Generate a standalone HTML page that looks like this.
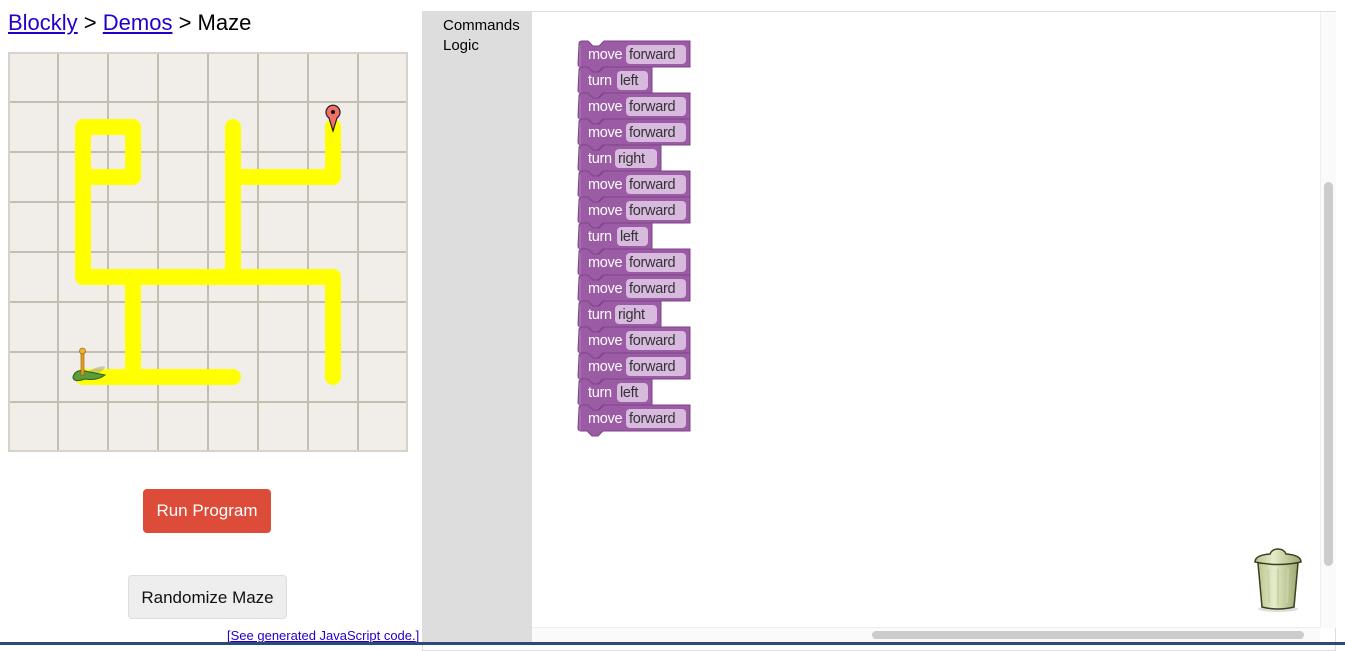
<!DOCTYPE html>
<html><head><meta charset="utf-8"><style>
body{margin:0;width:1345px;height:645px;overflow:hidden;background:#fff;font-family:"Liberation Sans",Arial,sans-serif;position:relative}
.crumb{position:absolute;left:8px;top:10px;font-size:22px;color:#000}
.crumb a{text-decoration:underline;color:#2200cc}
.btn{position:absolute;border-radius:4px;font-size:17px;text-align:center;box-sizing:border-box}
.run{left:143px;top:489px;width:128px;height:44px;line-height:44px;background:#dd4b39;color:#fff}
.rnd{left:128px;top:575px;width:159px;height:44px;line-height:44px;background:#eee;border:1px solid #ddd;color:#111}
.js{position:absolute;left:227px;top:628px;font-size:13px;color:#2200cc}
.js span{text-decoration:underline}
.ws{position:absolute;left:422px;top:11px;width:914px;height:640px;border:1px solid #ddd;box-sizing:border-box;background:#fff}
.tb{position:absolute;left:423px;top:12px;width:109px;height:633px;background:#ddd;font-size:15px;color:#000}
.tb div{padding-left:20px;height:20px;line-height:20px}
</style></head><body>
<div class="crumb"><a>Blockly</a> &gt; <a>Demos</a> &gt; Maze</div>
<svg style="position:absolute;left:8px;top:52px" width="400" height="400" viewBox="8 52 400 400">
<rect x="8" y="52" width="400" height="400" fill="#f1eeea"/>
<g stroke="#c4bdb2" stroke-width="2">
<line x1="58" y1="52" x2="58" y2="452"/><line x1="108" y1="52" x2="108" y2="452"/><line x1="158" y1="52" x2="158" y2="452"/><line x1="208" y1="52" x2="208" y2="452"/><line x1="258" y1="52" x2="258" y2="452"/><line x1="308" y1="52" x2="308" y2="452"/><line x1="358" y1="52" x2="358" y2="452"/>
<line x1="8" y1="102" x2="408" y2="102"/><line x1="8" y1="152" x2="408" y2="152"/><line x1="8" y1="202" x2="408" y2="202"/><line x1="8" y1="252" x2="408" y2="252"/><line x1="8" y1="302" x2="408" y2="302"/><line x1="8" y1="352" x2="408" y2="352"/><line x1="8" y1="402" x2="408" y2="402"/>
<rect x="9" y="53" width="398" height="398" fill="none" stroke="#d8d2c8"/>
</g>
<g stroke="#ffff00" stroke-width="16" stroke-linecap="round" stroke-linejoin="round" fill="none">
<path d="M83 277 V127 H133 V177 H83"/>
<path d="M83 277 H333 V377"/>
<path d="M133 277 V377"/>
<path d="M83 377 H233"/>
<path d="M233 277 V127"/>
<path d="M233 177 H333 V127"/>
</g>
<ellipse cx="94" cy="372" rx="12" ry="3" fill="#999" opacity=".5" transform="rotate(-25 94 372)"/>
<path d="M73 377 q2-8 12-6 q10 2 20 4 q-8 6-20 4 q-12 4-12-2z" fill="#5a9e3a" stroke="#2d5a1c" stroke-width="1"/>
<rect x="81" y="351" width="3" height="24" fill="#e8a020" stroke="#8a5a00" stroke-width=".6"/>
<circle cx="82.5" cy="351" r="3" fill="#f0b030" stroke="#8a5a00" stroke-width=".6"/>
<path d="M333 131 L329 118 A7 7 0 1 1 337 118 Z" fill="#f07068" stroke="#222" stroke-width="1.2"/>
<circle cx="333" cy="112" r="2" fill="#111"/>
</svg>
<div class="btn run">Run Program</div>
<div class="btn rnd">Randomize Maze</div>
<div class="js">[<span>See generated JavaScript code.</span>]</div>
<div class="ws"></div>
<div class="tb"><div style="margin-top:4px">Commands</div><div>Logic</div></div>
<div style="position:absolute;left:1320px;top:12px;width:15px;height:616px;background:#fafafa;border-left:1px solid #eee"></div>
<div style="position:absolute;left:1324px;top:182px;width:9px;height:384px;background:#ccc;border-radius:5px"></div>
<div style="position:absolute;left:532px;top:627px;width:788px;height:18px;background:#fafafa;border-top:1px solid #eee"></div>
<div style="position:absolute;left:872px;top:631px;width:432px;height:8px;background:#ccc;border-radius:4px"></div>
<div style="position:absolute;left:0;top:642px;width:1345px;height:3px;background:#2a4a7a"></div>
<svg style="position:absolute;left:1250px;top:545px" width="56" height="68" viewBox="0 0 56 68">
<defs><linearGradient id="g" x1="0" x2="1"><stop offset="0" stop-color="#b8c490"/><stop offset=".4" stop-color="#e6ecc8"/><stop offset="1" stop-color="#9aa870"/></linearGradient></defs>
<ellipse cx="28" cy="64" rx="20" ry="3" fill="#aaa" opacity=".4"/>
<path d="M8 18 L12 62 Q28 66 44 62 L48 18 Z" fill="url(#g)" stroke="#3a4020" stroke-width="1.5"/>
<g stroke="#c8d2a8" stroke-width="2"><line x1="18" y1="24" x2="19" y2="58"/><line x1="28" y1="24" x2="28" y2="60"/><line x1="38" y1="24" x2="37" y2="58"/></g>
<path d="M5 17 Q5 10 20 9 Q22 4 28 4 Q34 4 36 9 Q51 10 51 17 Q28 22 5 17Z" fill="url(#g)" stroke="#3a4020" stroke-width="1.5"/>
</svg>
<svg style="position:absolute;left:575px;top:36px" width="130" height="410" font-family="Liberation Sans, Arial, sans-serif" font-size="14.5" letter-spacing="-0.3">
<g id="blocks"></g>
</svg>
<script>
var rows=[["move","forward"],["turn","left"],["move","forward"],["move","forward"],["turn","right"],["move","forward"],["move","forward"],["turn","left"],["move","forward"],["move","forward"],["turn","right"],["move","forward"],["move","forward"],["turn","left"],["move","forward"]];
var g=document.getElementById('blocks'),h='';
rows.forEach(function(r,i){
 var y=5+i*26,w=r[0]=="move"?114:(r[1]=="left"?76:85);
 var x=4;
 var p='M'+x+' '+(y+3)+' q0-3 3-3 h6 l5 5 h6 l5-5 h'+(w-28)+' v26 h-'+(w-27)+' l-5 5 h-6 l-5-5 h-6 q-3 0-3-3 z';
 h+='<path d="'+p+'" fill="#9b5ba5" stroke="#7d4588" stroke-width="1"/>';
 h+='<path d="M'+(x+1)+' '+(y+4)+' v22" stroke="#b57fc0" stroke-width="1"/>';
 var fx=r[0]=="move"?47:(r[1]=="left"?38:36),fw=r[0]=="move"?60:(r[1]=="left"?31:42);
 h+='<text x="'+(x+9)+'" y="'+(y+18)+'" fill="#fff">'+r[0]+'</text>';
 h+='<rect x="'+(x+fx)+'" y="'+(y+4)+'" width="'+fw+'" height="19" rx="4" fill="#d7bade"/>';
 h+='<text x="'+(x+fx+3)+'" y="'+(y+18)+'" fill="#333">'+r[1]+'</text>';
});
g.innerHTML=h;
</script>
</body></html>
